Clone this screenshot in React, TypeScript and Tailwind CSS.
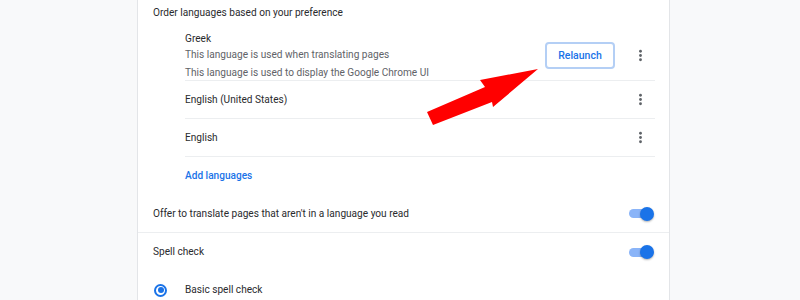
import React from "react";

const Dots = () => (
  <svg width="17" height="17" viewBox="0 0 24 24" fill="#5f6368">
    <circle cx="12" cy="6" r="2" />
    <circle cx="12" cy="12" r="2" />
    <circle cx="12" cy="18" r="2" />
  </svg>
);

const Toggle = () => (
  <div className="relative w-[25px] h-[14px] flex items-center shrink-0">
    <div className="w-[21px] h-[9px] rounded-full bg-[#8ab4f8]" />
    <div className="absolute right-0 top-0 w-[14px] h-[14px] rounded-full bg-[#1a73e8] shadow-[0_1px_2px_rgba(0,0,0,0.3)]" />
  </div>
);

export default function App() {
  return (
    <div
      className="relative w-[800px] h-[300px] overflow-hidden bg-[#f8f9fa] text-[10.1px] text-[#2a2b2e]"
      style={{ fontFamily: "Roboto, 'Liberation Sans', sans-serif" }}
    >
      <div className="ml-[137px] w-[533px] min-h-[300px] bg-white border-x border-[#e3e5e8] flex flex-col">
        <div className="shrink-0 h-[25px] flex items-center pl-[15px]">Order languages based on your preference</div>
        <div className="shrink-0 pl-[47px] pr-[14px] flex flex-col">
          <div className="shrink-0 h-[56px] flex items-start border-b border-[#eceef0]">
            <div className="flex-1 flex flex-col pt-[6px] leading-[16px]">
              <div>Greek</div>
              <div className="text-[#5f6368]">This language is used when translating pages</div>
              <div className="text-[#5f6368] mt-[2px]">This language is used to display the Google Chrome UI</div>
            </div>
            <div className="flex items-center mt-[17px]">
              <div className="w-[70px] h-[27px] rounded-[4px] border-2 border-[#b4cff5] flex items-center justify-center text-[10.5px] font-medium text-[#1a73e8]">
                Relaunch
              </div>
              <div className="w-[30px] ml-[10px] flex justify-center">
                <Dots />
              </div>
            </div>
          </div>
          <div className="shrink-0 h-[38px] flex items-center border-b border-[#eceef0]">
            <div className="flex-1">English (United States)</div>
            <div className="w-[30px] flex justify-center">
              <Dots />
            </div>
          </div>
          <div className="shrink-0 h-[38px] flex items-center border-b border-[#eceef0]">
            <div className="flex-1">English</div>
            <div className="w-[30px] flex justify-center">
              <Dots />
            </div>
          </div>
          <div className="shrink-0 h-[38px] flex items-center font-medium text-[#1a73e8]">Add languages</div>
        </div>
        <div className="shrink-0 h-[38px] flex items-center pl-[15px] pr-[15px] border-b border-[#eceef0]">
          <div className="flex-1">Offer to translate pages that aren't in a language you read</div>
          <Toggle />
        </div>
        <div className="shrink-0 h-[38px] flex items-center pl-[15px] pr-[15px]">
          <div className="flex-1">Spell check</div>
          <Toggle />
        </div>
        <div className="shrink-0 h-[38px] flex items-center pl-[16px]">
          <div className="w-[13px] h-[13px] rounded-full border-2 border-[#1a73e8] flex items-center justify-center">
            <div className="w-[6px] h-[6px] rounded-full bg-[#1a73e8]" />
          </div>
          <div className="ml-[18px]">Basic spell check</div>
        </div>
      </div>
      <svg className="absolute left-0 top-0" width="800" height="300">
        <polygon
          points="538,69 480,80 485,87 427,112 433,125 492,102 493,107"
          fill="#ff0000"
        />
      </svg>
    </div>
  );
}
